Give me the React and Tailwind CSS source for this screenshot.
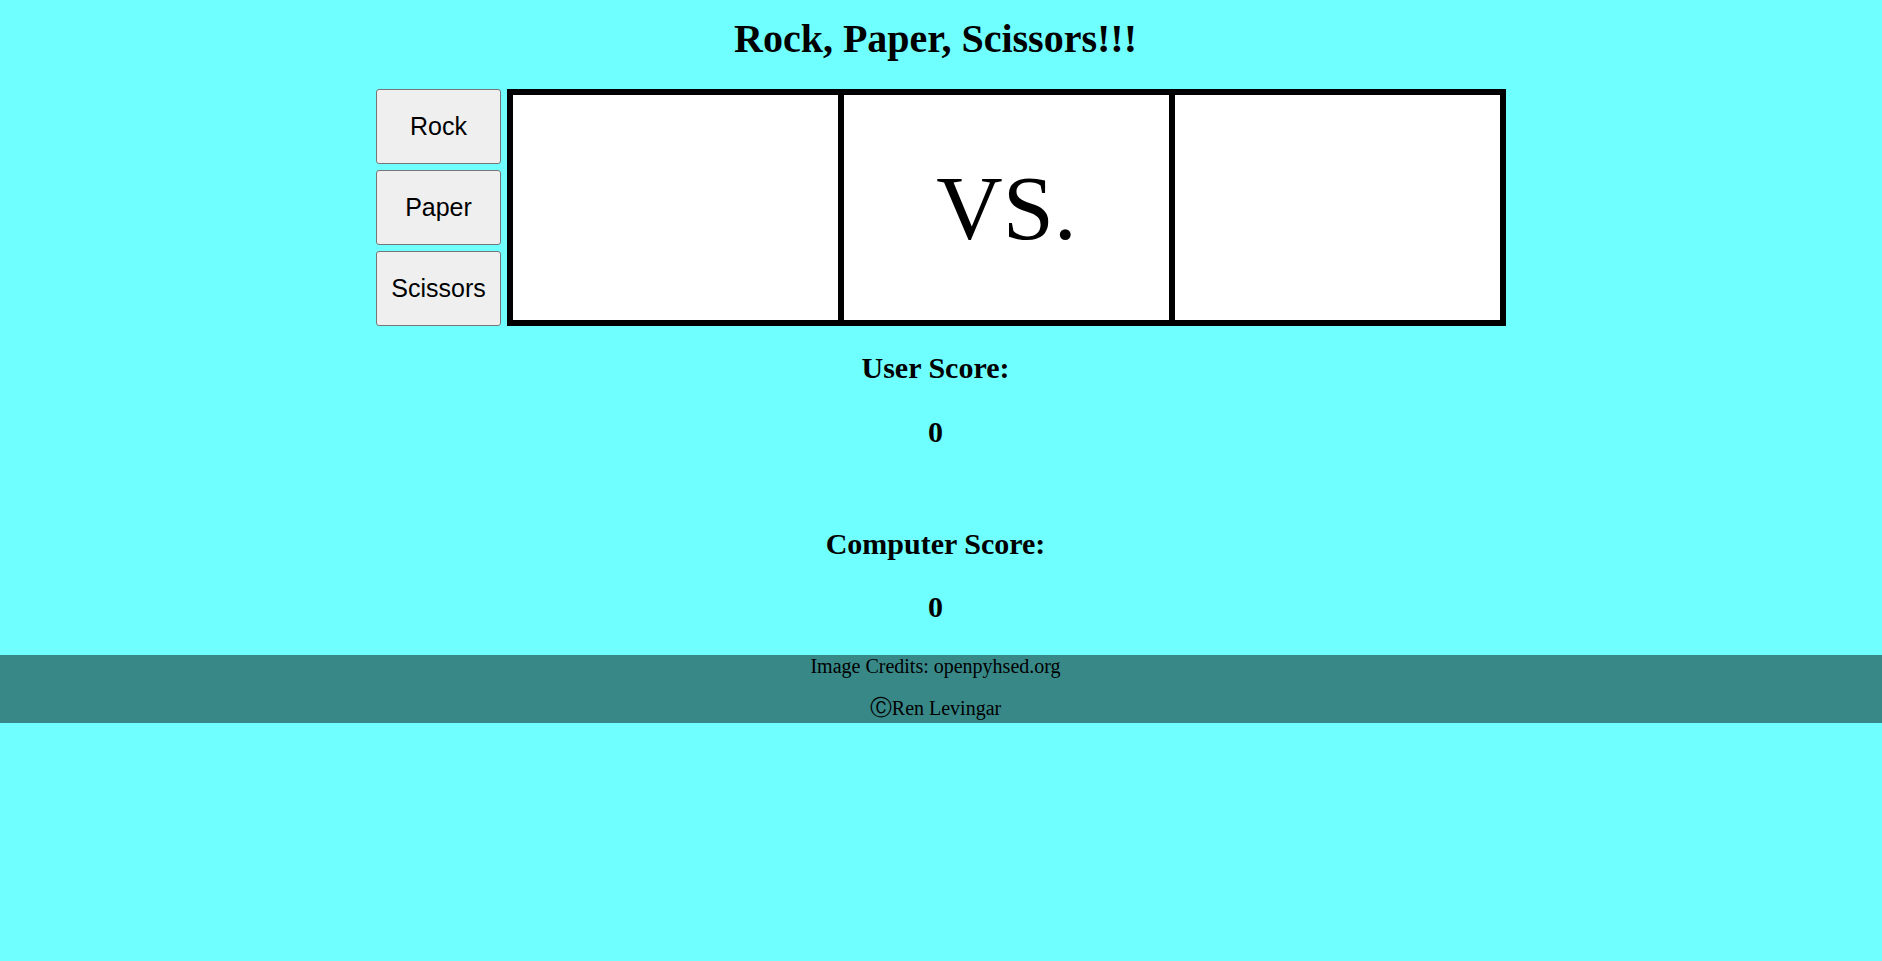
import React from 'react';

const choices = ['Rock', 'Paper', 'Scissors'];

export default function App() {
  return (
    <div className="min-h-screen bg-[#70ffff] text-black font-['Liberation_Serif','Times_New_Roman',serif]">
      {/* Title */}
      <h1 className="pt-[17px] pr-[11px] text-center text-[40px] font-bold leading-[44px]">
        Rock, Paper, Scissors!!!
      </h1>

      {/* Game board */}
      <div className="mt-[28px] flex justify-center gap-[6px]">
        <div className="flex w-[125px] flex-col gap-[6px]">
          {choices.map((c) => (
            <button
              key={c}
              className="h-[75px] rounded-[3px] border border-[#767676] bg-[#efefef] text-[25px] font-['Liberation_Sans',Arial,sans-serif] text-black"
            >
              {c}
            </button>
          ))}
        </div>
        <div className="flex h-[237px] w-[999px] border-[6px] border-black bg-white">
          <div className="flex-1" />
          <div className="flex flex-1 items-center justify-center border-l-[6px] border-black">
            <span className="text-[92px] leading-[102px]">VS.</span>
          </div>
          <div className="flex-1 border-l-[6px] border-black" />
        </div>
      </div>

      {/* Scores */}
      <div className="pr-[11px] text-center text-[30px] font-bold leading-[33px]">
        <h2 className="mt-[25px]">User Score:</h2>
        <h2 className="mt-[31px]">0</h2>
        <h2 className="mt-[79px]">Computer Score:</h2>
        <h2 className="mt-[30px]">0</h2>
      </div>

      {/* Footer */}
      <footer className="mt-[32px] bg-[#388888] pr-[11px] pb-[4px] text-center text-[20px] leading-[22px]">
        <p>Image Credits: openpyhsed.org</p>
        <p className="mt-[20px]">
          <span className="font-['DejaVu_Sans',sans-serif] text-[22px] leading-none">Ⓒ</span>Ren Levingar
        </p>
      </footer>
    </div>
  );
}
